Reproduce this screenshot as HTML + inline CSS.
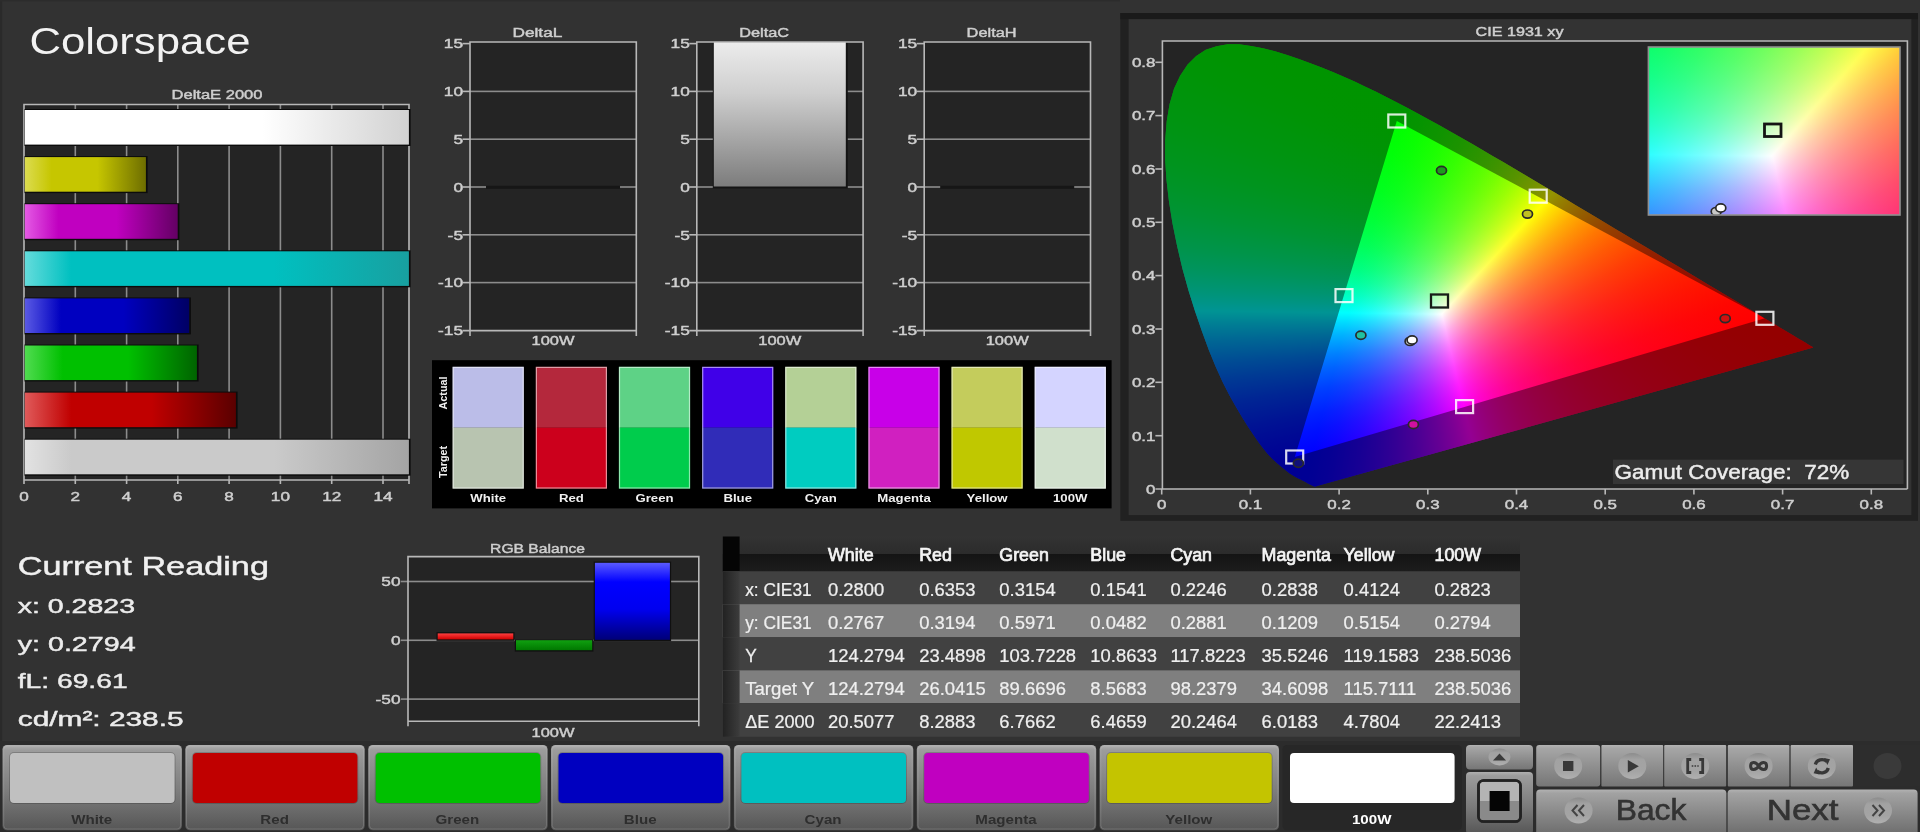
<!DOCTYPE html>
<html lang="en"><head><meta charset="utf-8"><title>Colorspace</title>
<style>html,body{margin:0;padding:0;background:#323232;overflow:hidden}body{position:relative;width:1920px;height:832px;filter:blur(0.45px)}svg{display:block;position:absolute;left:0;top:0;font-family:"Liberation Sans",sans-serif}text{white-space:pre}.cief{position:absolute;background:#000;isolation:isolate;overflow:hidden}.chn{position:absolute;left:0;top:0;right:0;bottom:0;isolation:isolate;mix-blend-mode:screen}.chn>div{position:absolute;left:0;top:0;right:0;bottom:0}.chn>.dk{mix-blend-mode:darken}</style></head>
<body>
<svg width="1920" height="832" viewBox="0 0 1920 832">
<defs><linearGradient id="dew" x1="0" x2="1" y1="0" y2="0"><stop offset="0" stop-color="#fff"/><stop offset="0.62" stop-color="#fff"/><stop offset="1" stop-color="#d2d2d2"/></linearGradient>
<linearGradient id="dey" x1="0" x2="1" y1="0" y2="0"><stop offset="0" stop-color="#dcdc50"/><stop offset="0.22" stop-color="#c6c600"/><stop offset="0.6" stop-color="#c6c600"/><stop offset="1" stop-color="#6e6e00"/></linearGradient>
<linearGradient id="dem" x1="0" x2="1" y1="0" y2="0"><stop offset="0" stop-color="#e45ae4"/><stop offset="0.22" stop-color="#c000c0"/><stop offset="0.6" stop-color="#c000c0"/><stop offset="1" stop-color="#640064"/></linearGradient>
<linearGradient id="dec" x1="0" x2="1" y1="0" y2="0"><stop offset="0" stop-color="#64dcdc"/><stop offset="0.12" stop-color="#00c0c0"/><stop offset="0.6499999999999999" stop-color="#00c0c0"/><stop offset="1" stop-color="#18a0a0"/></linearGradient>
<linearGradient id="deb" x1="0" x2="1" y1="0" y2="0"><stop offset="0" stop-color="#5a5ae4"/><stop offset="0.22" stop-color="#0000c0"/><stop offset="0.6" stop-color="#0000c0"/><stop offset="1" stop-color="#000064"/></linearGradient>
<linearGradient id="deg" x1="0" x2="1" y1="0" y2="0"><stop offset="0" stop-color="#50dc50"/><stop offset="0.22" stop-color="#00c000"/><stop offset="0.6" stop-color="#00c000"/><stop offset="1" stop-color="#006400"/></linearGradient>
<linearGradient id="der" x1="0" x2="1" y1="0" y2="0"><stop offset="0" stop-color="#e05a5a"/><stop offset="0.22" stop-color="#c00000"/><stop offset="0.6" stop-color="#c00000"/><stop offset="1" stop-color="#5a0000"/></linearGradient>
<linearGradient id="dek" x1="0" x2="1" y1="0" y2="0"><stop offset="0" stop-color="#e2e2e2"/><stop offset="0.12" stop-color="#cacaca"/><stop offset="0.6499999999999999" stop-color="#cacaca"/><stop offset="1" stop-color="#a4a4a4"/></linearGradient>
<linearGradient id="dc" x1="0" x2="0" y1="0" y2="1"><stop offset="0" stop-color="#ececec"/><stop offset="0.35" stop-color="#cfcfcf"/><stop offset="1" stop-color="#7c7c7c"/></linearGradient>
<linearGradient id="rb" x1="0" x2="0" y1="0" y2="1"><stop offset="0" stop-color="#5a5aff"/><stop offset="0.25" stop-color="#0000ff"/><stop offset="0.6" stop-color="#0000f0"/><stop offset="1" stop-color="#000078"/></linearGradient>
<linearGradient id="rr" x1="0" x2="0" y1="0" y2="1"><stop offset="0" stop-color="#ff4040"/><stop offset="1" stop-color="#d00000"/></linearGradient>
<linearGradient id="rg" x1="0" x2="0" y1="0" y2="1"><stop offset="0" stop-color="#10a010"/><stop offset="1" stop-color="#007800"/></linearGradient>
<linearGradient id="th" x1="0" x2="0" y1="0" y2="1"><stop offset="0" stop-color="#333"/><stop offset="0.5" stop-color="#2b2b2b"/><stop offset="0.5" stop-color="#141414"/><stop offset="1" stop-color="#1c1c1c"/></linearGradient>
<linearGradient id="tsel" x1="0" x2="1" y1="0" y2="0"><stop offset="0" stop-color="#222"/><stop offset="1" stop-color="#3c3c3c"/></linearGradient>
<linearGradient id="bt" x1="0" x2="0" y1="0" y2="1"><stop offset="0" stop-color="#b0b0b0"/><stop offset="0.06" stop-color="#9c9c9c"/><stop offset="0.55" stop-color="#7c7c7c"/><stop offset="1" stop-color="#565656"/></linearGradient>
<linearGradient id="bt2" x1="0" x2="0" y1="0" y2="1"><stop offset="0" stop-color="#b4b4b4"/><stop offset="0.08" stop-color="#a6a6a6"/><stop offset="1" stop-color="#767676"/></linearGradient>
<linearGradient id="bt3" x1="0" x2="0" y1="0" y2="1"><stop offset="0" stop-color="#b2b2b2"/><stop offset="0.08" stop-color="#a2a2a2"/><stop offset="1" stop-color="#6c6c6c"/></linearGradient>
<linearGradient id="bub" x1="0" x2="0" y1="0" y2="1"><stop offset="0" stop-color="#8c8c8c"/><stop offset="0.25" stop-color="#a2a2a2"/><stop offset="0.7" stop-color="#a4a4a4"/><stop offset="1" stop-color="#b0b0b0"/></linearGradient></defs>
<rect width="1920" height="832" fill="#323232"/>
<rect width="2.2" height="832" fill="#2a2a2a"/><rect width="1120" height="1.5" fill="#2c2c2c"/>
<text transform="translate(29.5 54.0) scale(1.181 1)" font-size="37" fill="#f2f2f2">Colorspace</text>
<text transform="translate(217.0 99.0) scale(1.323 1)" font-size="12.5" text-anchor="middle" fill="#cfcfcf" stroke="#cfcfcf" stroke-width="0.45">DeltaE 2000</text>
<rect x="24.0" y="104.5" width="385.0" height="375.5" fill="#242424"/>
<rect x="74.5" y="104.5" width="1.6" height="375.5" fill="#8c8c8c"/>
<rect x="125.8" y="104.5" width="1.6" height="375.5" fill="#8c8c8c"/>
<rect x="177.0" y="104.5" width="1.6" height="375.5" fill="#8c8c8c"/>
<rect x="228.3" y="104.5" width="1.6" height="375.5" fill="#8c8c8c"/>
<rect x="279.6" y="104.5" width="1.6" height="375.5" fill="#8c8c8c"/>
<rect x="330.9" y="104.5" width="1.6" height="375.5" fill="#8c8c8c"/>
<rect x="382.2" y="104.5" width="1.6" height="375.5" fill="#8c8c8c"/>
<path d="M24.0 484.0 V104.5 H409.0 V484.0 M24.0 480.0 H409.0" fill="none" stroke="#b8b8b8" stroke-width="1.6"/>
<rect x="74.5" y="480.0" width="1.6" height="4" fill="#b8b8b8"/>
<rect x="125.8" y="480.0" width="1.6" height="4" fill="#b8b8b8"/>
<rect x="177.0" y="480.0" width="1.6" height="4" fill="#b8b8b8"/>
<rect x="228.3" y="480.0" width="1.6" height="4" fill="#b8b8b8"/>
<rect x="279.6" y="480.0" width="1.6" height="4" fill="#b8b8b8"/>
<rect x="330.9" y="480.0" width="1.6" height="4" fill="#b8b8b8"/>
<rect x="382.2" y="480.0" width="1.6" height="4" fill="#b8b8b8"/>
<rect x="24.5" y="109.0" width="386.1" height="37" fill="#0c0c0c"/>
<rect x="24.8" y="110.0" width="384.1" height="34.6" fill="url(#dew)"/>
<rect x="24.5" y="156.1" width="123.1" height="37" fill="#0c0c0c"/>
<rect x="24.8" y="157.1" width="121.1" height="34.6" fill="url(#dey)"/>
<rect x="24.5" y="203.2" width="154.9" height="37" fill="#0c0c0c"/>
<rect x="24.8" y="204.2" width="152.9" height="34.6" fill="url(#dem)"/>
<rect x="24.5" y="250.3" width="386.1" height="37" fill="#0c0c0c"/>
<rect x="24.8" y="251.3" width="384.1" height="34.6" fill="url(#dec)"/>
<rect x="24.5" y="297.4" width="166.4" height="37" fill="#0c0c0c"/>
<rect x="24.8" y="298.4" width="164.4" height="34.6" fill="url(#deb)"/>
<rect x="24.5" y="344.5" width="174.1" height="37" fill="#0c0c0c"/>
<rect x="24.8" y="345.5" width="172.1" height="34.6" fill="url(#deg)"/>
<rect x="24.5" y="391.6" width="213.1" height="37" fill="#0c0c0c"/>
<rect x="24.8" y="392.6" width="211.1" height="34.6" fill="url(#der)"/>
<rect x="24.5" y="438.7" width="386.1" height="37" fill="#0c0c0c"/>
<rect x="24.8" y="439.7" width="384.1" height="34.6" fill="url(#dek)"/>
<text transform="translate(24.0 500.5) scale(1.320 1)" font-size="13" text-anchor="middle" fill="#cfcfcf" stroke="#cfcfcf" stroke-width="0.45">0</text>
<text transform="translate(75.3 500.5) scale(1.320 1)" font-size="13" text-anchor="middle" fill="#cfcfcf" stroke="#cfcfcf" stroke-width="0.45">2</text>
<text transform="translate(126.6 500.5) scale(1.320 1)" font-size="13" text-anchor="middle" fill="#cfcfcf" stroke="#cfcfcf" stroke-width="0.45">4</text>
<text transform="translate(177.8 500.5) scale(1.320 1)" font-size="13" text-anchor="middle" fill="#cfcfcf" stroke="#cfcfcf" stroke-width="0.45">6</text>
<text transform="translate(229.1 500.5) scale(1.320 1)" font-size="13" text-anchor="middle" fill="#cfcfcf" stroke="#cfcfcf" stroke-width="0.45">8</text>
<text transform="translate(280.4 500.5) scale(1.320 1)" font-size="13" text-anchor="middle" fill="#cfcfcf" stroke="#cfcfcf" stroke-width="0.45">10</text>
<text transform="translate(331.7 500.5) scale(1.320 1)" font-size="13" text-anchor="middle" fill="#cfcfcf" stroke="#cfcfcf" stroke-width="0.45">12</text>
<text transform="translate(383.0 500.5) scale(1.320 1)" font-size="13" text-anchor="middle" fill="#cfcfcf" stroke="#cfcfcf" stroke-width="0.45">14</text>
<text transform="translate(537.4 37.3) scale(1.281 1)" font-size="13.5" text-anchor="middle" fill="#cfcfcf" stroke="#cfcfcf" stroke-width="0.45">DeltaL</text>
<rect x="470.0" y="42.0" width="166.3" height="288.6" fill="#242424"/>
<rect x="470.0" y="90.6" width="166.3" height="1.6" fill="#8c8c8c"/>
<rect x="470.0" y="138.4" width="166.3" height="1.6" fill="#8c8c8c"/>
<rect x="470.0" y="186.2" width="166.3" height="1.6" fill="#8c8c8c"/>
<rect x="470.0" y="234.0" width="166.3" height="1.6" fill="#8c8c8c"/>
<rect x="470.0" y="281.8" width="166.3" height="1.6" fill="#8c8c8c"/>
<rect x="486.0" y="185.8" width="134.0" height="3" fill="#161616"/>
<path d="M470.0 336.1 V42.0 H636.3 V336.1 M462.5 330.6 H636.3" fill="none" stroke="#b8b8b8" stroke-width="1.6"/>
<rect x="462.5" y="42.8" width="7.5" height="1.6" fill="#b8b8b8"/>
<rect x="462.5" y="90.6" width="7.5" height="1.6" fill="#b8b8b8"/>
<rect x="462.5" y="138.4" width="7.5" height="1.6" fill="#b8b8b8"/>
<rect x="462.5" y="186.2" width="7.5" height="1.6" fill="#b8b8b8"/>
<rect x="462.5" y="234.0" width="7.5" height="1.6" fill="#b8b8b8"/>
<rect x="462.5" y="281.8" width="7.5" height="1.6" fill="#b8b8b8"/>
<text transform="translate(463.0 48.4) scale(1.280 1)" font-size="13.5" text-anchor="end" fill="#cfcfcf" stroke="#cfcfcf" stroke-width="0.45">15</text>
<text transform="translate(463.0 96.2) scale(1.280 1)" font-size="13.5" text-anchor="end" fill="#cfcfcf" stroke="#cfcfcf" stroke-width="0.45">10</text>
<text transform="translate(463.0 144.0) scale(1.280 1)" font-size="13.5" text-anchor="end" fill="#cfcfcf" stroke="#cfcfcf" stroke-width="0.45">5</text>
<text transform="translate(463.0 191.8) scale(1.280 1)" font-size="13.5" text-anchor="end" fill="#cfcfcf" stroke="#cfcfcf" stroke-width="0.45">0</text>
<text transform="translate(463.0 239.6) scale(1.280 1)" font-size="13.5" text-anchor="end" fill="#cfcfcf" stroke="#cfcfcf" stroke-width="0.45">-5</text>
<text transform="translate(463.0 287.4) scale(1.280 1)" font-size="13.5" text-anchor="end" fill="#cfcfcf" stroke="#cfcfcf" stroke-width="0.45">-10</text>
<text transform="translate(463.0 335.2) scale(1.280 1)" font-size="13.5" text-anchor="end" fill="#cfcfcf" stroke="#cfcfcf" stroke-width="0.45">-15</text>
<text transform="translate(553.0 345.2) scale(1.266 1)" font-size="13" text-anchor="middle" fill="#cfcfcf" stroke="#cfcfcf" stroke-width="0.45">100W</text>
<text transform="translate(764.2 37.3) scale(1.212 1)" font-size="13.5" text-anchor="middle" fill="#cfcfcf" stroke="#cfcfcf" stroke-width="0.45">DeltaC</text>
<rect x="696.8" y="42.0" width="166.3" height="288.6" fill="#242424"/>
<rect x="696.8" y="90.6" width="166.3" height="1.6" fill="#8c8c8c"/>
<rect x="696.8" y="138.4" width="166.3" height="1.6" fill="#8c8c8c"/>
<rect x="696.8" y="186.2" width="166.3" height="1.6" fill="#8c8c8c"/>
<rect x="696.8" y="234.0" width="166.3" height="1.6" fill="#8c8c8c"/>
<rect x="696.8" y="281.8" width="166.3" height="1.6" fill="#8c8c8c"/>
<rect x="712.8" y="42.0" width="135.0" height="146.5" fill="#141414"/>
<rect x="713.8" y="42.0" width="132.0" height="144.5" fill="url(#dc)"/>
<path d="M696.8 336.1 V42.0 H863.0999999999999 V336.1 M689.3 330.6 H863.0999999999999" fill="none" stroke="#b8b8b8" stroke-width="1.6"/>
<rect x="689.3" y="42.8" width="7.5" height="1.6" fill="#b8b8b8"/>
<rect x="689.3" y="90.6" width="7.5" height="1.6" fill="#b8b8b8"/>
<rect x="689.3" y="138.4" width="7.5" height="1.6" fill="#b8b8b8"/>
<rect x="689.3" y="186.2" width="7.5" height="1.6" fill="#b8b8b8"/>
<rect x="689.3" y="234.0" width="7.5" height="1.6" fill="#b8b8b8"/>
<rect x="689.3" y="281.8" width="7.5" height="1.6" fill="#b8b8b8"/>
<text transform="translate(689.8 48.4) scale(1.280 1)" font-size="13.5" text-anchor="end" fill="#cfcfcf" stroke="#cfcfcf" stroke-width="0.45">15</text>
<text transform="translate(689.8 96.2) scale(1.280 1)" font-size="13.5" text-anchor="end" fill="#cfcfcf" stroke="#cfcfcf" stroke-width="0.45">10</text>
<text transform="translate(689.8 144.0) scale(1.280 1)" font-size="13.5" text-anchor="end" fill="#cfcfcf" stroke="#cfcfcf" stroke-width="0.45">5</text>
<text transform="translate(689.8 191.8) scale(1.280 1)" font-size="13.5" text-anchor="end" fill="#cfcfcf" stroke="#cfcfcf" stroke-width="0.45">0</text>
<text transform="translate(689.8 239.6) scale(1.280 1)" font-size="13.5" text-anchor="end" fill="#cfcfcf" stroke="#cfcfcf" stroke-width="0.45">-5</text>
<text transform="translate(689.8 287.4) scale(1.280 1)" font-size="13.5" text-anchor="end" fill="#cfcfcf" stroke="#cfcfcf" stroke-width="0.45">-10</text>
<text transform="translate(689.8 335.2) scale(1.280 1)" font-size="13.5" text-anchor="end" fill="#cfcfcf" stroke="#cfcfcf" stroke-width="0.45">-15</text>
<text transform="translate(779.8 345.2) scale(1.266 1)" font-size="13" text-anchor="middle" fill="#cfcfcf" stroke="#cfcfcf" stroke-width="0.45">100W</text>
<text transform="translate(991.6 37.3) scale(1.212 1)" font-size="13.5" text-anchor="middle" fill="#cfcfcf" stroke="#cfcfcf" stroke-width="0.45">DeltaH</text>
<rect x="924.2" y="42.0" width="166.3" height="288.6" fill="#242424"/>
<rect x="924.2" y="90.6" width="166.3" height="1.6" fill="#8c8c8c"/>
<rect x="924.2" y="138.4" width="166.3" height="1.6" fill="#8c8c8c"/>
<rect x="924.2" y="186.2" width="166.3" height="1.6" fill="#8c8c8c"/>
<rect x="924.2" y="234.0" width="166.3" height="1.6" fill="#8c8c8c"/>
<rect x="924.2" y="281.8" width="166.3" height="1.6" fill="#8c8c8c"/>
<rect x="940.2" y="185.8" width="134.0" height="3" fill="#161616"/>
<path d="M924.2 336.1 V42.0 H1090.5 V336.1 M916.7 330.6 H1090.5" fill="none" stroke="#b8b8b8" stroke-width="1.6"/>
<rect x="916.7" y="42.8" width="7.5" height="1.6" fill="#b8b8b8"/>
<rect x="916.7" y="90.6" width="7.5" height="1.6" fill="#b8b8b8"/>
<rect x="916.7" y="138.4" width="7.5" height="1.6" fill="#b8b8b8"/>
<rect x="916.7" y="186.2" width="7.5" height="1.6" fill="#b8b8b8"/>
<rect x="916.7" y="234.0" width="7.5" height="1.6" fill="#b8b8b8"/>
<rect x="916.7" y="281.8" width="7.5" height="1.6" fill="#b8b8b8"/>
<text transform="translate(917.2 48.4) scale(1.280 1)" font-size="13.5" text-anchor="end" fill="#cfcfcf" stroke="#cfcfcf" stroke-width="0.45">15</text>
<text transform="translate(917.2 96.2) scale(1.280 1)" font-size="13.5" text-anchor="end" fill="#cfcfcf" stroke="#cfcfcf" stroke-width="0.45">10</text>
<text transform="translate(917.2 144.0) scale(1.280 1)" font-size="13.5" text-anchor="end" fill="#cfcfcf" stroke="#cfcfcf" stroke-width="0.45">5</text>
<text transform="translate(917.2 191.8) scale(1.280 1)" font-size="13.5" text-anchor="end" fill="#cfcfcf" stroke="#cfcfcf" stroke-width="0.45">0</text>
<text transform="translate(917.2 239.6) scale(1.280 1)" font-size="13.5" text-anchor="end" fill="#cfcfcf" stroke="#cfcfcf" stroke-width="0.45">-5</text>
<text transform="translate(917.2 287.4) scale(1.280 1)" font-size="13.5" text-anchor="end" fill="#cfcfcf" stroke="#cfcfcf" stroke-width="0.45">-10</text>
<text transform="translate(917.2 335.2) scale(1.280 1)" font-size="13.5" text-anchor="end" fill="#cfcfcf" stroke="#cfcfcf" stroke-width="0.45">-15</text>
<text transform="translate(1007.2 345.2) scale(1.266 1)" font-size="13" text-anchor="middle" fill="#cfcfcf" stroke="#cfcfcf" stroke-width="0.45">100W</text>
<rect x="432" y="360.2" width="679.6" height="148.2" fill="#000"/>
<rect x="452.6" y="366.8" width="71.2" height="61" fill="#bbbde8"/>
<rect x="452.6" y="427.6" width="71.2" height="61" fill="#b8c4b0"/>
<rect x="453.2" y="367.4" width="70" height="120.6" fill="none" stroke="#fff" stroke-opacity="0.55" stroke-width="1.2"/>
<text transform="translate(488.2 501.6) scale(1.200 1)" font-size="11" font-weight="bold" text-anchor="middle" fill="#f0f0f0">White</text>
<rect x="535.8" y="366.8" width="71.2" height="61" fill="#b4283c"/>
<rect x="535.8" y="427.6" width="71.2" height="61" fill="#cc001c"/>
<rect x="536.4" y="367.4" width="70" height="120.6" fill="none" stroke="#fff" stroke-opacity="0.55" stroke-width="1.2"/>
<text transform="translate(571.4 501.6) scale(1.200 1)" font-size="11" font-weight="bold" text-anchor="middle" fill="#f0f0f0">Red</text>
<rect x="618.9" y="366.8" width="71.2" height="61" fill="#5ed286"/>
<rect x="618.9" y="427.6" width="71.2" height="61" fill="#00cc4c"/>
<rect x="619.5" y="367.4" width="70" height="120.6" fill="none" stroke="#fff" stroke-opacity="0.55" stroke-width="1.2"/>
<text transform="translate(654.5 501.6) scale(1.200 1)" font-size="11" font-weight="bold" text-anchor="middle" fill="#f0f0f0">Green</text>
<rect x="702.1" y="366.8" width="71.2" height="61" fill="#4000e8"/>
<rect x="702.1" y="427.6" width="71.2" height="61" fill="#302cb8"/>
<rect x="702.7" y="367.4" width="70" height="120.6" fill="none" stroke="#fff" stroke-opacity="0.55" stroke-width="1.2"/>
<text transform="translate(737.7 501.6) scale(1.200 1)" font-size="11" font-weight="bold" text-anchor="middle" fill="#f0f0f0">Blue</text>
<rect x="785.2" y="366.8" width="71.2" height="61" fill="#b4d096"/>
<rect x="785.2" y="427.6" width="71.2" height="61" fill="#00ccc0"/>
<rect x="785.8" y="367.4" width="70" height="120.6" fill="none" stroke="#fff" stroke-opacity="0.55" stroke-width="1.2"/>
<text transform="translate(820.8 501.6) scale(1.200 1)" font-size="11" font-weight="bold" text-anchor="middle" fill="#f0f0f0">Cyan</text>
<rect x="868.4" y="366.8" width="71.2" height="61" fill="#c800e8"/>
<rect x="868.4" y="427.6" width="71.2" height="61" fill="#d020c0"/>
<rect x="869.0" y="367.4" width="70" height="120.6" fill="none" stroke="#fff" stroke-opacity="0.55" stroke-width="1.2"/>
<text transform="translate(904.0 501.6) scale(1.200 1)" font-size="11" font-weight="bold" text-anchor="middle" fill="#f0f0f0">Magenta</text>
<rect x="951.5" y="366.8" width="71.2" height="61" fill="#c4cc5c"/>
<rect x="951.5" y="427.6" width="71.2" height="61" fill="#c0c800"/>
<rect x="952.1" y="367.4" width="70" height="120.6" fill="none" stroke="#fff" stroke-opacity="0.55" stroke-width="1.2"/>
<text transform="translate(987.1 501.6) scale(1.200 1)" font-size="11" font-weight="bold" text-anchor="middle" fill="#f0f0f0">Yellow</text>
<rect x="1034.7" y="366.8" width="71.2" height="61" fill="#d4d4ff"/>
<rect x="1034.7" y="427.6" width="71.2" height="61" fill="#d0e0cc"/>
<rect x="1035.2" y="367.4" width="70" height="120.6" fill="none" stroke="#fff" stroke-opacity="0.55" stroke-width="1.2"/>
<text transform="translate(1070.2 501.6) scale(1.200 1)" font-size="11" font-weight="bold" text-anchor="middle" fill="#f0f0f0">100W</text>
<text transform="translate(446.5 393) rotate(-90)" font-size="11" font-weight="bold" text-anchor="middle" fill="#f0f0f0" textLength="33" lengthAdjust="spacingAndGlyphs">Actual</text>
<text transform="translate(446.5 462) rotate(-90)" font-size="11" font-weight="bold" text-anchor="middle" fill="#f0f0f0" textLength="32" lengthAdjust="spacingAndGlyphs">Target</text>
<rect x="1120.3" y="13" width="797.7" height="507.8" fill="#212121"/>
<rect x="1120.3" y="13" width="797.7" height="6.2" fill="#1a1a1a"/>
<rect x="1128.6" y="19.2" width="782.8" height="495.9" fill="#333"/>
<rect x="1162.4" y="41.0" width="745.0" height="448.0" fill="#242424"/>
<text transform="translate(1519.5 35.5) scale(1.243 1)" font-size="13" text-anchor="middle" fill="#cfcfcf" stroke="#cfcfcf" stroke-width="0.45">CIE 1931 xy</text>
<path d="M1162.4 489.0 V41.0 H1907.4 V489.0 M1155.4 489.0 H1907.4" fill="none" stroke="#b8b8b8" stroke-width="1.6"/>
<rect x="1160.9" y="489.0" width="1.6" height="5.5" fill="#b8b8b8"/>
<text transform="translate(1161.7 509.3) scale(1.300 1)" font-size="13" text-anchor="middle" fill="#cfcfcf" stroke="#cfcfcf" stroke-width="0.45">0</text>
<text transform="translate(1155.4 493.8) scale(1.300 1)" font-size="13" text-anchor="end" fill="#cfcfcf" stroke="#cfcfcf" stroke-width="0.45">0</text>
<rect x="1249.6" y="489.0" width="1.6" height="5.5" fill="#b8b8b8"/>
<text transform="translate(1250.4 509.3) scale(1.300 1)" font-size="13" text-anchor="middle" fill="#cfcfcf" stroke="#cfcfcf" stroke-width="0.45">0.1</text>
<rect x="1155.4" y="434.9" width="7" height="1.6" fill="#b8b8b8"/>
<text transform="translate(1155.4 440.5) scale(1.300 1)" font-size="13" text-anchor="end" fill="#cfcfcf" stroke="#cfcfcf" stroke-width="0.45">0.1</text>
<rect x="1338.3" y="489.0" width="1.6" height="5.5" fill="#b8b8b8"/>
<text transform="translate(1339.1 509.3) scale(1.300 1)" font-size="13" text-anchor="middle" fill="#cfcfcf" stroke="#cfcfcf" stroke-width="0.45">0.2</text>
<rect x="1155.4" y="381.5" width="7" height="1.6" fill="#b8b8b8"/>
<text transform="translate(1155.4 387.1) scale(1.300 1)" font-size="13" text-anchor="end" fill="#cfcfcf" stroke="#cfcfcf" stroke-width="0.45">0.2</text>
<rect x="1427.0" y="489.0" width="1.6" height="5.5" fill="#b8b8b8"/>
<text transform="translate(1427.8 509.3) scale(1.300 1)" font-size="13" text-anchor="middle" fill="#cfcfcf" stroke="#cfcfcf" stroke-width="0.45">0.3</text>
<rect x="1155.4" y="328.2" width="7" height="1.6" fill="#b8b8b8"/>
<text transform="translate(1155.4 333.8) scale(1.300 1)" font-size="13" text-anchor="end" fill="#cfcfcf" stroke="#cfcfcf" stroke-width="0.45">0.3</text>
<rect x="1515.7" y="489.0" width="1.6" height="5.5" fill="#b8b8b8"/>
<text transform="translate(1516.5 509.3) scale(1.300 1)" font-size="13" text-anchor="middle" fill="#cfcfcf" stroke="#cfcfcf" stroke-width="0.45">0.4</text>
<rect x="1155.4" y="274.8" width="7" height="1.6" fill="#b8b8b8"/>
<text transform="translate(1155.4 280.4) scale(1.300 1)" font-size="13" text-anchor="end" fill="#cfcfcf" stroke="#cfcfcf" stroke-width="0.45">0.4</text>
<rect x="1604.4" y="489.0" width="1.6" height="5.5" fill="#b8b8b8"/>
<text transform="translate(1605.2 509.3) scale(1.300 1)" font-size="13" text-anchor="middle" fill="#cfcfcf" stroke="#cfcfcf" stroke-width="0.45">0.5</text>
<rect x="1155.4" y="221.5" width="7" height="1.6" fill="#b8b8b8"/>
<text transform="translate(1155.4 227.1) scale(1.300 1)" font-size="13" text-anchor="end" fill="#cfcfcf" stroke="#cfcfcf" stroke-width="0.45">0.5</text>
<rect x="1693.1" y="489.0" width="1.6" height="5.5" fill="#b8b8b8"/>
<text transform="translate(1693.9 509.3) scale(1.300 1)" font-size="13" text-anchor="middle" fill="#cfcfcf" stroke="#cfcfcf" stroke-width="0.45">0.6</text>
<rect x="1155.4" y="168.2" width="7" height="1.6" fill="#b8b8b8"/>
<text transform="translate(1155.4 173.8) scale(1.300 1)" font-size="13" text-anchor="end" fill="#cfcfcf" stroke="#cfcfcf" stroke-width="0.45">0.6</text>
<rect x="1781.8" y="489.0" width="1.6" height="5.5" fill="#b8b8b8"/>
<text transform="translate(1782.6 509.3) scale(1.300 1)" font-size="13" text-anchor="middle" fill="#cfcfcf" stroke="#cfcfcf" stroke-width="0.45">0.7</text>
<rect x="1155.4" y="114.8" width="7" height="1.6" fill="#b8b8b8"/>
<text transform="translate(1155.4 120.4) scale(1.300 1)" font-size="13" text-anchor="end" fill="#cfcfcf" stroke="#cfcfcf" stroke-width="0.45">0.7</text>
<rect x="1870.5" y="489.0" width="1.6" height="5.5" fill="#b8b8b8"/>
<text transform="translate(1871.3 509.3) scale(1.300 1)" font-size="13" text-anchor="middle" fill="#cfcfcf" stroke="#cfcfcf" stroke-width="0.45">0.8</text>
<rect x="1155.4" y="61.5" width="7" height="1.6" fill="#b8b8b8"/>
<text transform="translate(1155.4 67.1) scale(1.300 1)" font-size="13" text-anchor="end" fill="#cfcfcf" stroke="#cfcfcf" stroke-width="0.45">0.8</text>
<rect x="1613" y="459.6" width="290.5" height="24.4" fill="#363636"/>
<text transform="translate(1614.5 479.0) scale(1.153 1)" font-size="19.5" fill="#ececec" stroke="#ececec" stroke-width="0.45">Gamut Coverage:  72%</text>
<text transform="translate(17.7 575.4) scale(1.293 1)" font-size="26.5" fill="#f0f0f0" stroke="#f0f0f0" stroke-width="0.45">Current Reading</text>
<text transform="translate(17.7 613.3) scale(1.400 1)" font-size="20.4" fill="#ececec" stroke="#ececec" stroke-width="0.45">x: 0.2823</text>
<text transform="translate(17.7 650.7) scale(1.406 1)" font-size="20.4" fill="#ececec" stroke="#ececec" stroke-width="0.45">y: 0.2794</text>
<text transform="translate(17.7 687.8) scale(1.385 1)" font-size="20.4" fill="#ececec" stroke="#ececec" stroke-width="0.45">fL: 69.61</text>
<text transform="translate(17.7 725.7) scale(1.464 1)" font-size="20.4" fill="#ececec" stroke="#ececec" stroke-width="0.45">cd/m²: 238.5</text>
<text transform="translate(537.5 552.7) scale(1.161 1)" font-size="13.5" text-anchor="middle" fill="#cfcfcf" stroke="#cfcfcf" stroke-width="0.45">RGB Balance</text>
<rect x="408.0" y="556.6" width="290.8" height="164.7" fill="#242424"/>
<rect x="401.0" y="580.7" width="297.8" height="1.6" fill="#8c8c8c"/>
<text transform="translate(400.5 586.3) scale(1.280 1)" font-size="13.5" text-anchor="end" fill="#cfcfcf" stroke="#cfcfcf" stroke-width="0.45">50</text>
<rect x="401.0" y="639.5" width="297.8" height="1.6" fill="#8c8c8c"/>
<text transform="translate(400.5 645.1) scale(1.280 1)" font-size="13.5" text-anchor="end" fill="#cfcfcf" stroke="#cfcfcf" stroke-width="0.45">0</text>
<rect x="401.0" y="698.3" width="297.8" height="1.6" fill="#8c8c8c"/>
<text transform="translate(400.5 703.9) scale(1.280 1)" font-size="13.5" text-anchor="end" fill="#cfcfcf" stroke="#cfcfcf" stroke-width="0.45">-50</text>
<rect x="436.5" y="632.2" width="78" height="8.6" fill="#101010"/><rect x="437.7" y="633.4" width="75.6" height="6" fill="url(#rr)"/>
<rect x="514.8" y="639.2" width="78.6" height="12.4" fill="#101010"/><rect x="516" y="640.2" width="76.2" height="10" fill="url(#rg)"/>
<rect x="593.7" y="561.6" width="77.4" height="79.6" fill="#101010"/><rect x="594.9" y="562.8" width="75" height="77" fill="url(#rb)"/>
<path d="M408.0 726.3 V556.6 H698.8 V726.3 M408.0 721.3 H698.8" fill="none" stroke="#b8b8b8" stroke-width="1.6"/>
<text transform="translate(553.0 736.8) scale(1.266 1)" font-size="13" text-anchor="middle" fill="#cfcfcf" stroke="#cfcfcf" stroke-width="0.45">100W</text>
<rect x="722.8" y="536.5" width="797.2" height="34.9" fill="url(#th)"/>
<rect x="722.8" y="536.5" width="16.8" height="34.9" fill="#050505"/>
<rect x="722.8" y="571.4" width="797.2" height="32.8" fill="#414141"/>
<rect x="722.8" y="571.4" width="16.8" height="32.8" fill="url(#tsel)"/>
<rect x="722.8" y="604.2" width="797.2" height="33.1" fill="#7f7f7f"/>
<rect x="722.8" y="604.2" width="16.8" height="33.1" fill="url(#tsel)"/>
<rect x="722.8" y="637.3" width="797.2" height="33.0" fill="#414141"/>
<rect x="722.8" y="637.3" width="16.8" height="33.0" fill="url(#tsel)"/>
<rect x="722.8" y="670.3" width="797.2" height="32.9" fill="#7f7f7f"/>
<rect x="722.8" y="670.3" width="16.8" height="32.9" fill="url(#tsel)"/>
<rect x="722.8" y="703.2" width="797.2" height="33.6" fill="#414141"/>
<rect x="722.8" y="703.2" width="16.8" height="33.6" fill="url(#tsel)"/>
<text transform="translate(828.0 561.0) scale(0.990 1)" font-size="18" fill="#f4f4f4" stroke="#f4f4f4" stroke-width="0.75">White</text>
<text transform="translate(919.2 561.0) scale(0.990 1)" font-size="18" fill="#f4f4f4" stroke="#f4f4f4" stroke-width="0.75">Red</text>
<text transform="translate(999.3 561.0) scale(0.990 1)" font-size="18" fill="#f4f4f4" stroke="#f4f4f4" stroke-width="0.75">Green</text>
<text transform="translate(1090.3 561.0) scale(0.990 1)" font-size="18" fill="#f4f4f4" stroke="#f4f4f4" stroke-width="0.75">Blue</text>
<text transform="translate(1170.4 561.0) scale(0.990 1)" font-size="18" fill="#f4f4f4" stroke="#f4f4f4" stroke-width="0.75">Cyan</text>
<text transform="translate(1261.6 561.0) scale(0.990 1)" font-size="18" fill="#f4f4f4" stroke="#f4f4f4" stroke-width="0.75">Magenta</text>
<text transform="translate(1343.6 561.0) scale(0.990 1)" font-size="18" fill="#f4f4f4" stroke="#f4f4f4" stroke-width="0.75">Yellow</text>
<text transform="translate(1434.5 561.0) scale(0.990 1)" font-size="18" fill="#f4f4f4" stroke="#f4f4f4" stroke-width="0.75">100W</text>
<text transform="translate(745.2 596.0) scale(0.913 1)" font-size="19" fill="#efefef" stroke="#efefef" stroke-width="0.25">x: CIE31</text>
<text transform="translate(828.0 596.0) scale(0.970 1)" font-size="19" fill="#efefef" stroke="#efefef" stroke-width="0.25">0.2800</text>
<text transform="translate(919.2 596.0) scale(0.970 1)" font-size="19" fill="#efefef" stroke="#efefef" stroke-width="0.25">0.6353</text>
<text transform="translate(999.3 596.0) scale(0.970 1)" font-size="19" fill="#efefef" stroke="#efefef" stroke-width="0.25">0.3154</text>
<text transform="translate(1090.3 596.0) scale(0.970 1)" font-size="19" fill="#efefef" stroke="#efefef" stroke-width="0.25">0.1541</text>
<text transform="translate(1170.4 596.0) scale(0.970 1)" font-size="19" fill="#efefef" stroke="#efefef" stroke-width="0.25">0.2246</text>
<text transform="translate(1261.6 596.0) scale(0.970 1)" font-size="19" fill="#efefef" stroke="#efefef" stroke-width="0.25">0.2838</text>
<text transform="translate(1343.6 596.0) scale(0.970 1)" font-size="19" fill="#efefef" stroke="#efefef" stroke-width="0.25">0.4124</text>
<text transform="translate(1434.5 596.0) scale(0.970 1)" font-size="19" fill="#efefef" stroke="#efefef" stroke-width="0.25">0.2823</text>
<text transform="translate(745.2 628.8) scale(0.913 1)" font-size="19" fill="#efefef" stroke="#efefef" stroke-width="0.25">y: CIE31</text>
<text transform="translate(828.0 628.8) scale(0.970 1)" font-size="19" fill="#efefef" stroke="#efefef" stroke-width="0.25">0.2767</text>
<text transform="translate(919.2 628.8) scale(0.970 1)" font-size="19" fill="#efefef" stroke="#efefef" stroke-width="0.25">0.3194</text>
<text transform="translate(999.3 628.8) scale(0.970 1)" font-size="19" fill="#efefef" stroke="#efefef" stroke-width="0.25">0.5971</text>
<text transform="translate(1090.3 628.8) scale(0.970 1)" font-size="19" fill="#efefef" stroke="#efefef" stroke-width="0.25">0.0482</text>
<text transform="translate(1170.4 628.8) scale(0.970 1)" font-size="19" fill="#efefef" stroke="#efefef" stroke-width="0.25">0.2881</text>
<text transform="translate(1261.6 628.8) scale(0.970 1)" font-size="19" fill="#efefef" stroke="#efefef" stroke-width="0.25">0.1209</text>
<text transform="translate(1343.6 628.8) scale(0.970 1)" font-size="19" fill="#efefef" stroke="#efefef" stroke-width="0.25">0.5154</text>
<text transform="translate(1434.5 628.8) scale(0.970 1)" font-size="19" fill="#efefef" stroke="#efefef" stroke-width="0.25">0.2794</text>
<text transform="translate(745.2 661.9) scale(0.907 1)" font-size="19" fill="#efefef" stroke="#efefef" stroke-width="0.25">Y</text>
<text transform="translate(828.0 661.9) scale(0.970 1)" font-size="19" fill="#efefef" stroke="#efefef" stroke-width="0.25">124.2794</text>
<text transform="translate(919.2 661.9) scale(0.970 1)" font-size="19" fill="#efefef" stroke="#efefef" stroke-width="0.25">23.4898</text>
<text transform="translate(999.3 661.9) scale(0.970 1)" font-size="19" fill="#efefef" stroke="#efefef" stroke-width="0.25">103.7228</text>
<text transform="translate(1090.3 661.9) scale(0.970 1)" font-size="19" fill="#efefef" stroke="#efefef" stroke-width="0.25">10.8633</text>
<text transform="translate(1170.4 661.9) scale(0.970 1)" font-size="19" fill="#efefef" stroke="#efefef" stroke-width="0.25">117.8223</text>
<text transform="translate(1261.6 661.9) scale(0.970 1)" font-size="19" fill="#efefef" stroke="#efefef" stroke-width="0.25">35.5246</text>
<text transform="translate(1343.6 661.9) scale(0.970 1)" font-size="19" fill="#efefef" stroke="#efefef" stroke-width="0.25">119.1583</text>
<text transform="translate(1434.5 661.9) scale(0.970 1)" font-size="19" fill="#efefef" stroke="#efefef" stroke-width="0.25">238.5036</text>
<text transform="translate(745.2 694.9) scale(0.980 1)" font-size="19" fill="#efefef" stroke="#efefef" stroke-width="0.25">Target Y</text>
<text transform="translate(828.0 694.9) scale(0.970 1)" font-size="19" fill="#efefef" stroke="#efefef" stroke-width="0.25">124.2794</text>
<text transform="translate(919.2 694.9) scale(0.970 1)" font-size="19" fill="#efefef" stroke="#efefef" stroke-width="0.25">26.0415</text>
<text transform="translate(999.3 694.9) scale(0.970 1)" font-size="19" fill="#efefef" stroke="#efefef" stroke-width="0.25">89.6696</text>
<text transform="translate(1090.3 694.9) scale(0.970 1)" font-size="19" fill="#efefef" stroke="#efefef" stroke-width="0.25">8.5683</text>
<text transform="translate(1170.4 694.9) scale(0.970 1)" font-size="19" fill="#efefef" stroke="#efefef" stroke-width="0.25">98.2379</text>
<text transform="translate(1261.6 694.9) scale(0.970 1)" font-size="19" fill="#efefef" stroke="#efefef" stroke-width="0.25">34.6098</text>
<text transform="translate(1343.6 694.9) scale(0.970 1)" font-size="19" fill="#efefef" stroke="#efefef" stroke-width="0.25">115.7111</text>
<text transform="translate(1434.5 694.9) scale(0.970 1)" font-size="19" fill="#efefef" stroke="#efefef" stroke-width="0.25">238.5036</text>
<text transform="translate(745.2 727.8) scale(0.953 1)" font-size="19" fill="#efefef" stroke="#efefef" stroke-width="0.25">ΔE 2000</text>
<text transform="translate(828.0 727.8) scale(0.970 1)" font-size="19" fill="#efefef" stroke="#efefef" stroke-width="0.25">20.5077</text>
<text transform="translate(919.2 727.8) scale(0.970 1)" font-size="19" fill="#efefef" stroke="#efefef" stroke-width="0.25">8.2883</text>
<text transform="translate(999.3 727.8) scale(0.970 1)" font-size="19" fill="#efefef" stroke="#efefef" stroke-width="0.25">6.7662</text>
<text transform="translate(1090.3 727.8) scale(0.970 1)" font-size="19" fill="#efefef" stroke="#efefef" stroke-width="0.25">6.4659</text>
<text transform="translate(1170.4 727.8) scale(0.970 1)" font-size="19" fill="#efefef" stroke="#efefef" stroke-width="0.25">20.2464</text>
<text transform="translate(1261.6 727.8) scale(0.970 1)" font-size="19" fill="#efefef" stroke="#efefef" stroke-width="0.25">6.0183</text>
<text transform="translate(1343.6 727.8) scale(0.970 1)" font-size="19" fill="#efefef" stroke="#efefef" stroke-width="0.25">4.7804</text>
<text transform="translate(1434.5 727.8) scale(0.970 1)" font-size="19" fill="#efefef" stroke="#efefef" stroke-width="0.25">22.2413</text>
<rect x="0" y="741" width="1920" height="91" fill="#2c2c2c"/>
<rect x="2.5" y="745" width="179.4" height="85.2" rx="4.5" fill="url(#bt)"/>
<rect x="3.7" y="746.2" width="177" height="82.8" rx="3.6" fill="none" stroke="#c8c8c8" stroke-opacity="0.22" stroke-width="1"/>
<rect x="9.0" y="752" width="166.6" height="52" rx="5" fill="#000" fill-opacity="0.18"/>
<rect x="10.0" y="753" width="164.6" height="50" rx="4" fill="#c0c0c0"/>
<text transform="translate(91.7 823.5) scale(1.120 1)" font-size="13.5" font-weight="bold" text-anchor="middle" fill="#2e2e2e">White</text>
<rect x="185.3" y="745" width="179.4" height="85.2" rx="4.5" fill="url(#bt)"/>
<rect x="186.5" y="746.2" width="177" height="82.8" rx="3.6" fill="none" stroke="#c8c8c8" stroke-opacity="0.22" stroke-width="1"/>
<rect x="191.8" y="752" width="166.6" height="52" rx="5" fill="#000" fill-opacity="0.18"/>
<rect x="192.8" y="753" width="164.6" height="50" rx="4" fill="#c00000"/>
<text transform="translate(274.6 823.5) scale(1.120 1)" font-size="13.5" font-weight="bold" text-anchor="middle" fill="#2e2e2e">Red</text>
<rect x="368.2" y="745" width="179.4" height="85.2" rx="4.5" fill="url(#bt)"/>
<rect x="369.4" y="746.2" width="177" height="82.8" rx="3.6" fill="none" stroke="#c8c8c8" stroke-opacity="0.22" stroke-width="1"/>
<rect x="374.7" y="752" width="166.6" height="52" rx="5" fill="#000" fill-opacity="0.18"/>
<rect x="375.7" y="753" width="164.6" height="50" rx="4" fill="#00c000"/>
<text transform="translate(457.4 823.5) scale(1.120 1)" font-size="13.5" font-weight="bold" text-anchor="middle" fill="#2e2e2e">Green</text>
<rect x="551.0" y="745" width="179.4" height="85.2" rx="4.5" fill="url(#bt)"/>
<rect x="552.2" y="746.2" width="177" height="82.8" rx="3.6" fill="none" stroke="#c8c8c8" stroke-opacity="0.22" stroke-width="1"/>
<rect x="557.5" y="752" width="166.6" height="52" rx="5" fill="#000" fill-opacity="0.18"/>
<rect x="558.5" y="753" width="164.6" height="50" rx="4" fill="#0000c0"/>
<text transform="translate(640.2 823.5) scale(1.120 1)" font-size="13.5" font-weight="bold" text-anchor="middle" fill="#2e2e2e">Blue</text>
<rect x="733.9" y="745" width="179.4" height="85.2" rx="4.5" fill="url(#bt)"/>
<rect x="735.1" y="746.2" width="177" height="82.8" rx="3.6" fill="none" stroke="#c8c8c8" stroke-opacity="0.22" stroke-width="1"/>
<rect x="740.4" y="752" width="166.6" height="52" rx="5" fill="#000" fill-opacity="0.18"/>
<rect x="741.4" y="753" width="164.6" height="50" rx="4" fill="#00c0c0"/>
<text transform="translate(823.1 823.5) scale(1.120 1)" font-size="13.5" font-weight="bold" text-anchor="middle" fill="#2e2e2e">Cyan</text>
<rect x="916.8" y="745" width="179.4" height="85.2" rx="4.5" fill="url(#bt)"/>
<rect x="918.0" y="746.2" width="177" height="82.8" rx="3.6" fill="none" stroke="#c8c8c8" stroke-opacity="0.22" stroke-width="1"/>
<rect x="923.2" y="752" width="166.6" height="52" rx="5" fill="#000" fill-opacity="0.18"/>
<rect x="924.2" y="753" width="164.6" height="50" rx="4" fill="#c000c0"/>
<text transform="translate(1006.0 823.5) scale(1.120 1)" font-size="13.5" font-weight="bold" text-anchor="middle" fill="#2e2e2e">Magenta</text>
<rect x="1099.6" y="745" width="179.4" height="85.2" rx="4.5" fill="url(#bt)"/>
<rect x="1100.8" y="746.2" width="177" height="82.8" rx="3.6" fill="none" stroke="#c8c8c8" stroke-opacity="0.22" stroke-width="1"/>
<rect x="1106.1" y="752" width="166.6" height="52" rx="5" fill="#000" fill-opacity="0.18"/>
<rect x="1107.1" y="753" width="164.6" height="50" rx="4" fill="#c4c400"/>
<text transform="translate(1188.8 823.5) scale(1.120 1)" font-size="13.5" font-weight="bold" text-anchor="middle" fill="#2e2e2e">Yellow</text>
<rect x="1282.5" y="745" width="179.4" height="85.2" rx="4.5" fill="#272727"/>
<rect x="1290.0" y="753" width="164.6" height="50" rx="4" fill="#ffffff"/>
<text transform="translate(1371.7 823.5) scale(1.120 1)" font-size="13.5" font-weight="bold" text-anchor="middle" fill="#fff">100W</text>
<rect x="1466" y="745" width="67" height="24.5" rx="4" fill="url(#bt2)"/>
<rect x="1466" y="772" width="67" height="62" rx="4" fill="url(#bt)"/>
<ellipse cx="1499.5" cy="757" rx="11" ry="8.5" fill="url(#bub)"/>
<path d="M1493 760.5 L1499.5 753.5 L1506 760.5Z" fill="#3a3a3a"/>
<rect x="1478.5" y="780.5" width="42" height="41" rx="5" fill="#b4b4b4" stroke="#222" stroke-width="2.6"/>
<rect x="1479.8" y="801" width="39.4" height="19" fill="#8a8a8a"/>
<rect x="1478.5" y="780.5" width="42" height="41" rx="5" fill="none" stroke="#222" stroke-width="2.6"/>
<rect x="1489.6" y="791" width="20" height="20" fill="#050505"/>
<rect x="1536.2" y="745" width="64.0" height="41.5" rx="3" fill="url(#bt2)"/>
<ellipse cx="1568.2" cy="766" rx="14" ry="13" fill="url(#bub)"/>
<rect x="1563.0" y="761" width="10.4" height="10" fill="#383838"/>
<rect x="1601.4" y="745" width="61.8" height="41.5" rx="1" fill="url(#bt2)"/>
<ellipse cx="1632.3" cy="766" rx="14" ry="13" fill="url(#bub)"/>
<path d="M1627.8 760 L1638.8 766.3 L1627.8 772.6Z" fill="#383838"/>
<rect x="1664.2" y="745" width="62.0" height="41.5" rx="1" fill="url(#bt2)"/>
<ellipse cx="1695.2" cy="766" rx="14" ry="13" fill="url(#bub)"/>
<path d="M1691.2 759.5 H1687.7 V772.5 H1691.2 M1699.2 759.5 H1702.7 V772.5 H1699.2" fill="none" stroke="#383838" stroke-width="2.8"/>
<path d="M1691.7 766 H1698.7" stroke="#383838" stroke-width="1.6" stroke-dasharray="1.6 1.2"/>
<rect x="1727.8" y="745" width="61.6" height="41.5" rx="1" fill="url(#bt2)"/>
<ellipse cx="1758.6" cy="766" rx="14" ry="13" fill="url(#bub)"/>
<path d="M1758.6 766 C1755.6 761 1750.6 761.5 1750.6 766 C1750.6 770.5 1755.6 771 1758.6 766 C1761.6 761 1766.6 761.5 1766.6 766 C1766.6 770.5 1761.6 771 1758.6 766Z" fill="none" stroke="#383838" stroke-width="3"/>
<rect x="1790.6" y="745" width="62.4" height="41.5" rx="1" fill="url(#bt2)"/>
<ellipse cx="1821.8" cy="766" rx="14" ry="13" fill="url(#bub)"/>
<path d="M1815.3 764.5 A6.8 6.2 0 0 1 1826.8 761.5" fill="none" stroke="#383838" stroke-width="3.2"/>
<path d="M1824.0 758 L1830.0 759.2 L1827.4 765Z" fill="#383838"/>
<path d="M1828.3 768 A6.8 6.2 0 0 1 1816.8 771" fill="none" stroke="#383838" stroke-width="3.2"/>
<path d="M1819.6 774.5 L1813.6 773.3 L1816.2 767.5Z" fill="#383838"/>
<rect x="1853" y="745" width="67" height="41.5" fill="#2d2d2d"/>
<ellipse cx="1887.5" cy="766" rx="14" ry="13" fill="#3a3a3a"/>
<rect x="1536.2" y="789.6" width="190.2" height="46" rx="4" fill="url(#bt3)"/>
<rect x="1727.6" y="789.6" width="190" height="46" rx="4" fill="url(#bt3)"/>
<ellipse cx="1578.6" cy="810.5" rx="14" ry="13" fill="url(#bub)"/>
<ellipse cx="1878" cy="810.5" rx="14" ry="13" fill="url(#bub)"/>
<path d="M1577.5 805 L1572.5 810.5 L1577.5 816 M1584 805 L1579 810.5 L1584 816" fill="none" stroke="#444" stroke-width="2"/>
<path d="M1872.5 805 L1877.5 810.5 L1872.5 816 M1879 805 L1884 810.5 L1879 816" fill="none" stroke="#444" stroke-width="2"/>
<text transform="translate(1615.7 820.0) scale(1.085 1)" font-size="29.3" fill="#333" stroke="#333" stroke-width="0.6">Back</text>
<text transform="translate(1766.7 820.0) scale(1.192 1)" font-size="29.3" fill="#333" stroke="#333" stroke-width="0.6">Next</text>
</svg>
<div class="cief" style="left:1163px;top:41px;width:744px;height:448px;clip-path:path('M153.1 445.3 L152.9 445.4 L152.4 445.4 L151.8 445.4 L150.7 445.3 L148.5 444.3 L144.5 442.2 L142.9 441.3 L140.5 440.1 L137.6 438.6 L134.4 436.9 L130.8 435.0 L126.4 432.2 L120.8 427.8 L114.5 422.5 L108.8 417.2 L104.3 412.4 L100.3 407.5 L95.9 401.7 L90.9 394.6 L85.5 386.6 L79.7 377.2 L73.3 366.5 L66.5 354.5 L59.6 340.9 L52.7 325.7 L45.8 308.9 L39.0 290.6 L32.2 270.8 L25.5 249.6 L19.5 227.9 L14.2 205.6 L9.6 183.0 L6.0 160.8 L3.5 139.3 L2.1 118.4 L2.2 98.7 L3.7 80.3 L6.6 63.1 L11.0 47.8 L17.1 34.7 L24.6 23.6 L33.2 14.9 L42.8 8.8 L53.5 5.2 L64.6 3.3 L76.1 3.2 L88.0 4.9 L100.0 7.3 L112.0 10.3 L124.1 14.1 L135.9 18.1 L147.4 22.2 L158.7 26.6 L169.8 31.1 L180.8 35.8 L191.6 40.6 L202.4 45.7 L213.1 50.8 L223.8 56.2 L234.5 61.7 L245.1 67.2 L255.7 72.9 L266.2 78.7 L276.8 84.6 L287.3 90.5 L297.9 96.5 L308.5 102.6 L319.1 108.7 L329.6 114.9 L340.2 121.1 L350.7 127.3 L361.2 133.5 L371.7 139.7 L382.2 145.9 L392.6 152.1 L403.0 158.3 L413.2 164.4 L423.4 170.5 L433.5 176.6 L443.4 182.5 L453.3 188.4 L463.0 194.3 L472.6 200.0 L481.9 205.6 L491.1 211.1 L500.2 216.5 L508.9 221.7 L517.4 226.8 L525.6 231.8 L533.5 236.5 L540.9 241.0 L548.0 245.2 L554.8 249.3 L561.4 253.2 L567.7 257.0 L573.7 260.6 L578.8 263.6 L583.6 266.5 L589.3 269.8 L596.6 274.3 L604.8 279.2 L612.1 283.6 L617.7 286.9 L622.4 289.7 L626.6 292.2 L630.4 294.5 L633.6 296.5 L636.5 298.2 L638.9 299.6 L640.9 300.8 L642.7 301.8 L644.1 302.7 L645.2 303.4 L646.2 304.0 L647.3 304.7 L648.4 305.3 L649.2 305.8 L649.8 306.1 L650.1 306.4 L650.4 306.5Z')"><div class="chn"><div style="background:conic-gradient(from 0deg at 147.9px 416.0px,#000000 0deg,#010000 15deg,#0b0000 18.25deg,#1c0000 22deg,#330000 25.75deg,#5d0000 31deg,#770000 33.5deg,#9b0000 36.5deg,#c00000 39deg,#d90000 40.5deg,#ff0000 42.5deg,#ff0000 194.25deg,#000000 194.5deg,#000000 360deg)"></div><div class="dk" style="background:conic-gradient(from 0deg at 233.8px 80.0px,#000000 0deg,#000000 14.25deg,#ff0000 14.5deg,#ff0000 166.75deg,#f90000 167.25deg,#da0000 169.25deg,#ae0000 172.5deg,#7f0000 176.5deg,#5a0000 180.25deg,#400000 183.25deg,#290000 186.25deg,#0e0000 190.75deg,#000000 194.25deg,#000000 360deg)"></div></div><div class="chn"><div style="background:conic-gradient(from 0deg at 147.9px 416.0px,#00ff00 0deg,#00fe00 42.5deg,#00dd00 44.25deg,#00ad00 47.25deg,#009300 49.25deg,#007600 51.75deg,#005a00 54.75deg,#003d00 58.5deg,#002500 62.5deg,#001500 66deg,#000600 70deg,#000000 73.25deg,#000000 253deg,#00ff00 253.25deg,#00ff00 360deg)"></div><div class="dk" style="background:conic-gradient(from 0deg at 601.9px 277.3px,#00ff00 0deg,#00ff00 73deg,#000000 73.25deg,#000100 253.5deg,#001000 256deg,#002000 258deg,#004000 261deg,#006300 263.5deg,#008000 265.25deg,#00b200 267.75deg,#00dc00 269.5deg,#00ff00 270.75deg,#00ff00 360deg)"></div></div><div class="chn"><div style="background:conic-gradient(from 0deg at 233.8px 80.0px,#000000 0deg,#000001 119.75deg,#00000a 125.5deg,#000018 131.75deg,#00002a 138deg,#00003f 143.75deg,#000058 149deg,#000075 153.75deg,#00008f 157.25deg,#0000ad 160.5deg,#0000c9 163deg,#0000e6 165.25deg,#0000fd 166.75deg,#0000ff 167.25deg,#0000ff 298deg,#000000 298.25deg,#000000 360deg)"></div><div class="dk" style="background:conic-gradient(from 0deg at 601.9px 277.3px,#000000 0deg,#000000 118deg,#0000ff 118.25deg,#0000ff 270.75deg,#0000d8 272.25deg,#0000c1 273.25deg,#00009f 275deg,#000080 277deg,#000059 280.25deg,#000047 282.25deg,#000035 284.5deg,#00001f 288.25deg,#000009 293.75deg,#000002 296.75deg,#000000 298.75deg,#000000 360deg)"></div></div></div>
<div class="cief" style="left:1648px;top:47px;width:252px;height:168px;"><div class="chn"><div style="background:conic-gradient(from 0deg at -129.6px 396.9px,#000000 0deg,#010000 14.5deg,#0b0000 17.5deg,#180000 20.5deg,#320000 24.75deg,#580000 29.5deg,#740000 32.25deg,#9c0000 35.5deg,#c10000 38deg,#e40000 40deg,#fc0000 41.25deg,#ff0000 41.5deg,#ff0000 193.75deg,#000000 194deg,#000000 360deg)"></div><div class="dk" style="background:conic-gradient(from 0deg at 36.9px -280.3px,#000000 0deg,#000000 13.75deg,#ff0000 14deg,#ff0000 167.25deg,#d10000 170.25deg,#ab0000 173deg,#780000 177.25deg,#4e0000 181.5deg,#220000 187deg,#0c0000 190.75deg,#000000 193.75deg,#000000 360deg)"></div></div><div class="chn"><div style="background:conic-gradient(from 0deg at -129.6px 396.9px,#00ff00 0deg,#00ff00 41.25deg,#00f700 41.75deg,#00ca00 44.25deg,#00a800 46.5deg,#008e00 48.5deg,#006e00 51.5deg,#004d00 55.25deg,#003200 59.25deg,#001d00 63.25deg,#000a00 68deg,#000000 72deg,#000000 252.25deg,#00ff00 252.5deg,#00ff00 360deg)"></div><div class="dk" style="background:conic-gradient(from 0deg at 750.7px 117.4px,#00ff00 0deg,#00ff00 72.25deg,#000000 72.5deg,#000100 252.75deg,#000b00 254.75deg,#001b00 257deg,#003900 260deg,#005800 262.5deg,#008c00 265.75deg,#00b900 268deg,#00e900 270deg,#00fe00 270.75deg,#00ff00 360deg)"></div></div><div class="chn"><div style="background:conic-gradient(from 0deg at 36.9px -280.3px,#000000 0deg,#000001 120.75deg,#00000a 126.5deg,#000017 132.5deg,#000026 137.75deg,#000038 143deg,#00004a 147.25deg,#000064 152deg,#00007d 155.75deg,#00009a 159.25deg,#0000b6 162deg,#0000db 165deg,#0000fd 167.25deg,#0000ff 167.75deg,#0000ff 299deg,#000000 299.25deg,#000000 360deg)"></div><div class="dk" style="background:conic-gradient(from 0deg at 750.7px 117.4px,#000000 0deg,#000000 119deg,#0000ff 119.25deg,#0000ff 270.75deg,#0000c9 273deg,#0000ab 274.5deg,#000087 276.75deg,#00006d 278.75deg,#00004f 281.75deg,#000037 284.75deg,#000021 288.5deg,#00000a 294.25deg,#000001 298.25deg,#000000 360deg)"></div></div></div>
<svg width="1920" height="832" viewBox="0 0 1920 832">
<defs><clipPath id="ins"><rect x="1648.4" y="47.0" width="251.5999999999999" height="168.0"/></clipPath></defs>
<path d="M1316.1 486.3 L1315.9 486.4 L1315.4 486.4 L1314.8 486.4 L1313.7 486.3 L1311.5 485.3 L1307.5 483.2 L1305.9 482.3 L1303.5 481.1 L1300.6 479.6 L1297.4 477.9 L1293.8 476.0 L1289.4 473.2 L1283.8 468.8 L1277.5 463.5 L1271.8 458.2 L1267.3 453.4 L1263.3 448.5 L1258.9 442.7 L1253.9 435.6 L1248.5 427.6 L1242.7 418.2 L1236.3 407.5 L1229.5 395.5 L1222.6 381.9 L1215.7 366.7 L1208.8 349.9 L1202.0 331.6 L1195.2 311.8 L1188.5 290.6 L1182.5 268.9 L1177.2 246.6 L1172.6 224.0 L1169.0 201.8 L1166.5 180.3 L1165.1 159.4 L1165.2 139.7 L1166.7 121.3 L1169.6 104.1 L1174.0 88.8 L1180.1 75.7 L1187.6 64.6 L1196.2 55.9 L1205.8 49.8 L1216.5 46.2 L1227.6 44.3 L1239.1 44.2 L1251.0 45.9 L1263.0 48.3 L1275.0 51.3 L1287.1 55.1 L1298.9 59.1 L1310.4 63.2 L1321.7 67.6 L1332.8 72.1 L1343.8 76.8 L1354.6 81.6 L1365.4 86.7 L1376.1 91.8 L1386.8 97.2 L1397.5 102.7 L1408.1 108.2 L1418.7 113.9 L1429.2 119.7 L1439.8 125.6 L1450.3 131.5 L1460.9 137.5 L1471.5 143.6 L1482.1 149.7 L1492.6 155.9 L1503.2 162.1 L1513.7 168.3 L1524.2 174.5 L1534.7 180.7 L1545.2 186.9 L1555.6 193.1 L1566.0 199.3 L1576.2 205.4 L1586.4 211.5 L1596.5 217.6 L1606.4 223.5 L1616.3 229.4 L1626.0 235.3 L1635.6 241.0 L1644.9 246.6 L1654.1 252.1 L1663.2 257.5 L1671.9 262.7 L1680.4 267.8 L1688.6 272.8 L1696.5 277.5 L1703.9 282.0 L1711.0 286.2 L1717.8 290.3 L1724.4 294.2 L1730.7 298.0 L1736.7 301.6 L1741.8 304.6 L1746.6 307.5 L1752.3 310.8 L1759.6 315.3 L1767.8 320.2 L1775.1 324.6 L1780.7 327.9 L1785.4 330.7 L1789.6 333.2 L1793.4 335.5 L1796.6 337.5 L1799.5 339.2 L1801.9 340.6 L1803.9 341.8 L1805.7 342.8 L1807.1 343.7 L1808.2 344.4 L1809.2 345.0 L1810.3 345.7 L1811.4 346.3 L1812.2 346.8 L1812.8 347.1 L1813.1 347.4 L1813.4 347.5Z M1764.9 318.3 L1396.8 121.0 L1294.8 457.0Z" fill="#000" fill-opacity="0.42" fill-rule="evenodd"/>
<rect x="1756.4" y="311.8" width="17" height="13" fill="none" stroke="#fff" stroke-opacity="0.85" stroke-width="2.2"/>
<rect x="1388.3" y="114.5" width="17" height="13" fill="none" stroke="#fff" stroke-opacity="0.85" stroke-width="2.2"/>
<rect x="1286.2" y="450.5" width="17" height="13" fill="none" stroke="#fff" stroke-opacity="0.85" stroke-width="2.2"/>
<rect x="1335.5" y="289.1" width="17" height="13" fill="none" stroke="#fff" stroke-opacity="0.85" stroke-width="2.2"/>
<rect x="1456.1" y="400.1" width="17" height="13" fill="none" stroke="#fff" stroke-opacity="0.85" stroke-width="2.2"/>
<rect x="1529.7" y="189.7" width="17" height="13" fill="none" stroke="#fff" stroke-opacity="0.85" stroke-width="2.2"/>
<rect x="1431.0" y="294.5" width="17" height="13" fill="none" stroke="#181c18" stroke-opacity="1" stroke-width="2.3"/>
<ellipse cx="1725.2" cy="318.6" rx="5" ry="4.1" fill="#d01010" stroke="#2a2a2a" stroke-width="1.7"/>
<ellipse cx="1441.5" cy="170.5" rx="5" ry="4.1" fill="#1c9c1c" stroke="#2a2a2a" stroke-width="1.7"/>
<ellipse cx="1298.4" cy="463.3" rx="5" ry="4.1" fill="#101078" stroke="#2a2a2a" stroke-width="1.7"/>
<ellipse cx="1360.9" cy="335.3" rx="5" ry="4.1" fill="#20c0a0" stroke="#2a2a2a" stroke-width="1.7"/>
<ellipse cx="1413.4" cy="424.5" rx="5" ry="4.1" fill="#d010a0" stroke="#2a2a2a" stroke-width="1.7"/>
<ellipse cx="1527.5" cy="214.1" rx="5" ry="4.1" fill="#c0c020" stroke="#2a2a2a" stroke-width="1.7"/>
<ellipse cx="1410.1" cy="341.4" rx="5" ry="4.1" fill="#c8c8c8" stroke="#2a2a2a" stroke-width="1.7"/>
<ellipse cx="1412.1" cy="340.0" rx="5" ry="4.1" fill="#ffffff" stroke="#2a2a2a" stroke-width="1.7"/>
<g clip-path="url(#ins)"><ellipse cx="1716.2" cy="211.6" rx="5" ry="4.1" fill="#c8c8c8" stroke="#2a2a2a" stroke-width="1.7"/><ellipse cx="1720.8" cy="208.0" rx="5" ry="4.1" fill="#ffffff" stroke="#2a2a2a" stroke-width="1.7"/></g>
<rect x="1648.4" y="47.0" width="251.5999999999999" height="168.0" fill="none" stroke="#909090" stroke-width="1.6"/>
<rect x="1764.5" y="124" width="16.5" height="12.5" fill="none" stroke="#141414" stroke-width="2.8"/>
</svg>
</body></html>
